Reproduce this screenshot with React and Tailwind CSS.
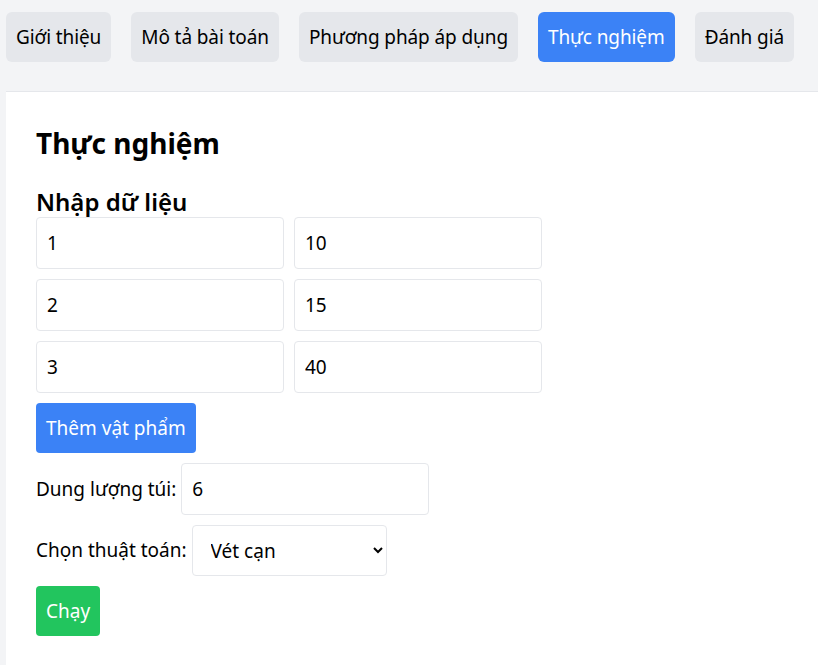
import { useState } from "react";

const tabs = ["Giới thiệu", "Mô tả bài toán", "Phương pháp áp dụng", "Thực nghiệm", "Đánh giá"];

export default function App() {
  const [active, setActive] = useState("Thực nghiệm");
  const [items, setItems] = useState([
    { w: "1", v: "10" },
    { w: "2", v: "15" },
    { w: "3", v: "40" },
  ]);
  const [cap, setCap] = useState("6");
  const [algo, setAlgo] = useState("brute");

  return (
    <div className="min-h-screen bg-[#f3f4f6] text-black font-['Segoe_UI','Noto_Sans',sans-serif] text-[19px]">
      {/* Nav */}
      <nav className="flex gap-5 px-1.5 pt-3 pb-[29px]">
        {tabs.map((t) => (
          <button
            key={t}
            onClick={() => setActive(t)}
            className={
              "h-[50px] px-2.5 rounded-md tracking-[-0.1px] " +
              (active === t ? "bg-[#3b82f6] text-white" : "bg-[#e5e7eb]")
            }
          >
            {t}
          </button>
        ))}
      </nav>

      {/* Card */}
      <section className="ml-1.5 min-h-[580px] bg-white border-t border-[#e5e7eb] px-[30px] pt-[33px] pb-8">
        <h2 className="text-[28px] font-bold leading-[36px] mb-[25px]">Thực nghiệm</h2>
        <h3 className="text-[24px] font-semibold leading-[31px]">Nhập dữ liệu</h3>

        <div className="flex flex-col gap-2.5">
          {items.map((it, i) => (
            <div key={i} className="flex gap-2.5">
              <input
                className="w-[248px] h-[52px] border border-[#e5e7eb] rounded px-2.5 outline-none"
                value={it.w}
                onChange={(e) => {
                  const n = [...items];
                  n[i] = { ...n[i], w: e.target.value };
                  setItems(n);
                }}
              />
              <input
                className="w-[248px] h-[52px] border border-[#e5e7eb] rounded px-2.5 outline-none"
                value={it.v}
                onChange={(e) => {
                  const n = [...items];
                  n[i] = { ...n[i], v: e.target.value };
                  setItems(n);
                }}
              />
            </div>
          ))}

          <div>
            <button
              onClick={() => setItems([...items, { w: "", v: "" }])}
              className="h-[50px] px-2.5 rounded bg-[#3b82f6] text-white"
            >
              Thêm vật phẩm
            </button>
          </div>

          <div className="flex items-center gap-[5px]">
            <span>Dung lượng túi:</span>
            <input
              className="w-[248px] h-[52px] border border-[#e5e7eb] rounded px-2.5 outline-none"
              value={cap}
              onChange={(e) => setCap(e.target.value)}
            />
          </div>

          <div className="flex items-center gap-[5px]">
            <span>Chọn thuật toán:</span>
            <select
              className="w-[195px] h-[51px] border border-[#e5e7eb] rounded px-3.5 bg-white outline-none"
              value={algo}
              onChange={(e) => setAlgo(e.target.value)}
            >
              <option value="brute">Vét cạn</option>
              <option value="greedy">Tham lam</option>
              <option value="dp">Quy hoạch động</option>
            </select>
          </div>

          <div>
            <button className="h-[50px] px-2.5 rounded bg-[#22c55e] text-white">Chạy</button>
          </div>
        </div>
      </section>
    </div>
  );
}
